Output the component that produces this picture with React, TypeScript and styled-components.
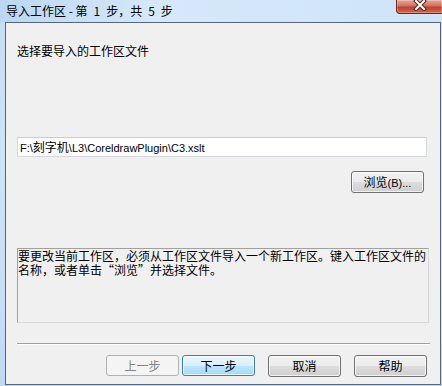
import styled, { createGlobalStyle } from 'styled-components';

const GlobalStyle = createGlobalStyle`
  html, body {
    margin: 0;
    padding: 0;
    background: #bcd6f1;
  }

  body {
    font-family: "Liberation Sans", "Noto Sans CJK SC", sans-serif;
    font-size: 12px;
    color: #000;
  }
`;

const StyledWindow = styled.div`
  width: 442px;
  height: 386px;
  display: flex;
  flex-direction: column;
  background: linear-gradient(to bottom, #c3dcf5 0%, #cfe3f8 40%, #c0daf5 100%);
  overflow: hidden;
`;

const StyledTitleBar = styled.div`
  height: 22px;
  display: flex;
  justify-content: space-between;
  align-items: flex-start;
  flex-shrink: 0;
  background: linear-gradient(to right, #bcd7f3 0%, #d6e8fa 35%, #cfe4f9 100%);
`;

const StyledTitle = styled.div`
  padding: 3px 0 0 6px;
  font-family: "Noto Sans CJK SC", sans-serif;
  font-size: 12px;
  line-height: 16px;
  color: #000;
  white-space: pre;
`;

const StyledClose = styled.div`
  width: 47px;
  height: 14px;
  margin-right: -1px;
  box-sizing: border-box;
  border: 1px solid #6e2a22;
  border-top: none;
  border-radius: 0 0 0 4px;
  background: linear-gradient(to bottom, #e6a69b 0%, #d2705f 45%, #c0402c 55%, #d16a4e 100%);
  display: flex;
  justify-content: center;
  align-items: flex-start;
  box-shadow: inset 0 0 0 1px rgba(255, 255, 255, 0.25);
`;

const StyledClient = styled.div`
  flex: 1;
  margin: 0 1px 1px 5px;
  box-sizing: border-box;
  border: 1px solid #56657a;
  background: #f0f0f0;
  padding: 0 12px 0 11px;
  display: flex;
  flex-direction: column;
  font-family: "Noto Sans CJK SC", sans-serif;
`;

const StyledHeading = styled.div`
  margin-top: 20px;
  font-size: 12px;
  line-height: 16px;
`;

const StyledInput = styled.div`
  margin-top: 78px;
  width: 410px;
  height: 20px;
  box-sizing: border-box;
  border: 1px solid #d5d9de;
  border-top-color: #c9ccd1;
  background: #fff;
  padding: 0 2px;
  font-family: "Liberation Sans", "Noto Sans CJK SC", sans-serif;
  font-size: 11px;
  line-height: 18px;
  white-space: nowrap;
`;

const StyledCjk = styled.span`
  font-family: "Noto Sans CJK SC", sans-serif;
  font-size: 12px;
`;

const StyledBrowseRow = styled.div`
  margin-top: 14px;
  display: flex;
  justify-content: flex-end;
  padding-right: 4px;
`;

const StyledButton = styled.div<{ $variant?: 'default' | 'disabled' }>`
  width: 73px;
  height: ${({ $variant }) => ($variant ? '21px' : '22px')};
  box-sizing: border-box;
  border-radius: 3px;
  border: 1px solid ${({ $variant }) => ($variant === 'default' ? '#3c7fb1' : $variant === 'disabled' ? '#adb2b5' : '#707070')};
  background: ${({ $variant }) =>
    $variant === 'default'
      ? 'linear-gradient(to bottom, #eaf6fd 0%, #d9f0fc 50%, #bee6fd 51%, #a7d9f5 100%)'
      : $variant === 'disabled'
        ? '#f4f4f4'
        : 'linear-gradient(to bottom, #f2f2f2 0%, #ebebeb 50%, #dddddd 51%, #cfcfcf 100%)'};
  box-shadow: inset 0 0 0 1px ${({ $variant }) => ($variant === 'disabled' ? 'transparent' : 'rgba(255,255,255,0.7)')};
  color: ${({ $variant }) => ($variant === 'disabled' ? '#838383' : '#000')};
  display: flex;
  justify-content: center;
  align-items: center;
  font-family: "Noto Sans CJK SC", sans-serif;
  font-size: 12px;
  line-height: 14px;
`;

const StyledBrowseLabel = styled.span`
  font-family: "Noto Sans CJK SC", sans-serif;

  span {
    font-family: "Liberation Sans", sans-serif;
    font-size: 11px;
  }
`;

const StyledDescription = styled.div`
  margin-top: 55px;
  width: 412px;
  height: 75px;
  box-sizing: border-box;
  border: 1px solid #a0a0a0;
  border-right-color: #d8d8d8;
  border-bottom-color: #d8d8d8;
  font-size: 12px;
  line-height: 14px;
  padding: 0;
  white-space: nowrap;
`;

const StyledSeparator = styled.div`
  margin-top: 20px;
  width: 413px;
  height: 1px;
  background: #a0a0a0;
  border-bottom: 1px solid #ffffff;
`;

const StyledButtonRow = styled.div`
  margin-top: 10px;
  display: flex;
  justify-content: flex-end;
  padding-right: 1px;
`;

const StyledWizardNav = styled.div`
  display: flex;
  gap: 3px;
  margin-right: 13px;
`;

const StyledActions = styled.div`
  display: flex;
  gap: 13px;
`;

function CloseGlyph() {
  return (
    <svg width="14" height="11" viewBox="0 0 14 11">
      <path d="M3 1 L11 9 M11 1 L3 9"
            stroke="#4a2a28"
            strokeWidth="4"
            strokeLinecap="square" />
      <path d="M3 1 L11 9 M11 1 L3 9"
            stroke="#ffffff"
            strokeWidth="2"
            strokeLinecap="square" />
    </svg>
  );
}

function App() {
  return (
    <>
      <GlobalStyle />
      <StyledWindow>
        <StyledTitleBar>
          <StyledTitle>{'导入工作区 - 第\u20021\u2002步，共\u20025\u2002步'}</StyledTitle>
          <StyledClose>
            <CloseGlyph />
          </StyledClose>
        </StyledTitleBar>
        <StyledClient>
          <StyledHeading>选择要导入的工作区文件</StyledHeading>
          <StyledInput>
            F:\<StyledCjk>刻字机</StyledCjk>\L3\CoreldrawPlugin\C3.xslt
          </StyledInput>
          <StyledBrowseRow>
            <StyledButton>
              <StyledBrowseLabel>浏览<span>(B)...</span></StyledBrowseLabel>
            </StyledButton>
          </StyledBrowseRow>
          <StyledDescription>
            要更改当前工作区，必须从工作区文件导入一个新工作区。键入工作区文件的
            <br />
            名称，或者单击“浏览”并选择文件。
          </StyledDescription>
          <StyledSeparator />
          <StyledButtonRow>
            <StyledWizardNav>
              <StyledButton $variant="disabled">上一步</StyledButton>
              <StyledButton $variant="default">下一步</StyledButton>
            </StyledWizardNav>
            <StyledActions>
              <StyledButton>取消</StyledButton>
              <StyledButton>帮助</StyledButton>
            </StyledActions>
          </StyledButtonRow>
        </StyledClient>
      </StyledWindow>
    </>
  );
}

export default App;
